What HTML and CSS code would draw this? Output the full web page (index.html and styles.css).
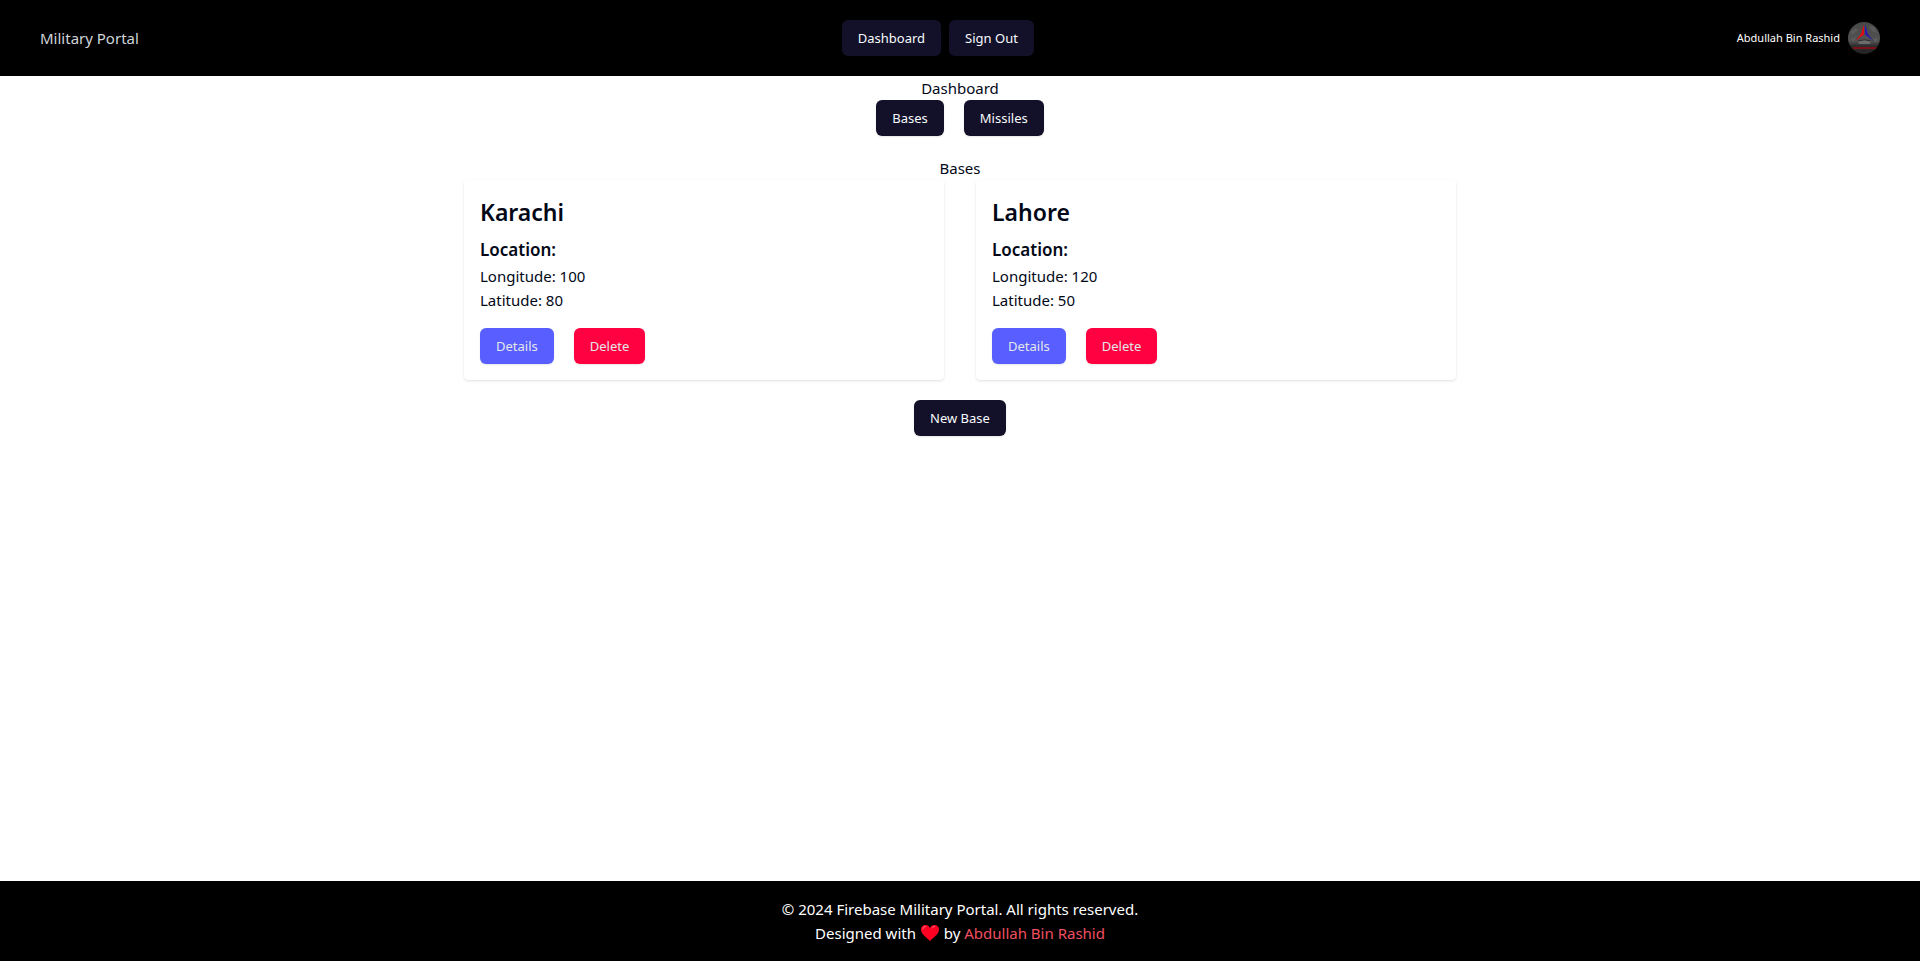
FILE: index.html
```html
<!DOCTYPE html>
<html lang="en">
<head>
<meta charset="utf-8">
<meta name="viewport" content="width=device-width, initial-scale=1">
<title>Military Portal</title>
<link rel="stylesheet" href="styles.css">
</head>
<body>
<header class="topbar">
  <a class="brand" href="#">Military Portal</a>
  <nav class="nav">
    <button class="btn" type="button">Dashboard</button>
    <button class="btn" type="button">Sign Out</button>
  </nav>
  <div class="user">
    <span class="user-name">Abdullah Bin Rashid</span>
    <svg class="avatar" viewBox="0 0 32 32" role="img" aria-label="Profile picture">
      <defs>
        <clipPath id="round"><circle cx="16" cy="16" r="16"/></clipPath>
        <linearGradient id="stone" x1="0" y1="0" x2="0" y2="1">
          <stop offset="0" stop-color="#484848"/>
          <stop offset=".6" stop-color="#525252"/>
          <stop offset=".75" stop-color="#2c2c2c"/>
          <stop offset="1" stop-color="#222"/>
        </linearGradient>
      </defs>
      <g clip-path="url(#round)">
        <rect width="32" height="32" fill="url(#stone)"/>
        <path d="M3 9l5-3 2 2-6 5zM20 4l6 1 3 6-5-2zM3 17l5-2-2 5zM25 17l5-1-2 5z" fill="#707070" opacity=".4"/>
        <path d="M10 19.500c3-2.500 10-2.500 13 0l-1 2.500H11z" fill="#6c6c6c"/>
        <path d="M10 19q6.500-2.500 13 0" fill="none" stroke="#2c2c2c"/>
        <path d="M5 26h23" stroke="#7c1018" stroke-width="2"/>
        <path d="M16 2.500V12.500L7.500 19l5.800-7.500 1.200-5z" fill="#e00b13"/>
        <path d="M17 2.500l1.500 4 1.200 5L25.500 19 17 12.500z" fill="#2b1bab"/>
      </g>
    </svg>
  </div>
</header>

<main class="main">
  <h1 class="title">Dashboard</h1>
  <div class="tabs">
    <button class="btn" type="button">Bases</button>
    <button class="btn" type="button">Missiles</button>
  </div>
  <section class="bases">
    <h2 class="title">Bases</h2>
    <div class="cards">
      <article class="card">
        <h3 class="card-name">Karachi</h3>
        <h4 class="card-label">Location:</h4>
        <p>Longitude: 100</p>
        <p>Latitude: 80</p>
        <div class="actions">
          <button class="btn btn-details" type="button">Details</button>
          <button class="btn btn-delete" type="button">Delete</button>
        </div>
      </article>
      <article class="card">
        <h3 class="card-name">Lahore</h3>
        <h4 class="card-label">Location:</h4>
        <p>Longitude: 120</p>
        <p>Latitude: 50</p>
        <div class="actions">
          <button class="btn btn-details" type="button">Details</button>
          <button class="btn btn-delete" type="button">Delete</button>
        </div>
      </article>
    </div>
    <button class="btn" type="button">New Base</button>
  </section>
</main>

<footer class="footer">
  <p>© 2024 Firebase Military Portal. All rights reserved.</p>
  <p>Designed with
    <svg class="heart" viewBox="0 0 18 18" role="img" aria-label="love">
      <path d="M9 17C6 13.500 0 10.500 0 5.500 0 2.500 2 1 4.500 1 6.500 1 8.200 2.200 9 4 9.800 2.200 11.500 1 13.500 1 16 1 18 2.500 18 5.500 18 10.500 12 13.500 9 17z" fill="#ff0022"/>
      <path d="M2 5c0-1.500 1-2.500 2.500-2.500" fill="none" stroke="#ff7a85" stroke-linecap="round"/>
      <path d="M11 4c.5-1 1.500-1.500 2.500-1.500" fill="none" stroke="#ff7a85" stroke-linecap="round"/>
    </svg>
    by <a class="author" href="#">Abdullah Bin Rashid</a></p>
</footer>
</body>
</html>
```
FILE: styles.css
```css
*, *::before, *::after { box-sizing: border-box; }

body {
  margin: 0;
  min-height: 100vh;
  display: flex;
  flex-direction: column;
  background: #fff;
  color: #020817;
  font: 400 15px/24px "Noto Sans", sans-serif;
}

h1, h2, h3, h4, p { margin: 0; }
a { color: inherit; text-decoration: none; }

.topbar {
  display: flex;
  align-items: center;
  justify-content: space-between;
  padding: 20px 40px;
  background: #000;
}
.brand { color: #d1d5db; }
.nav { display: flex; gap: 8px; }
.user { display: flex; align-items: center; gap: 8px; }
.user-name { color: #fff; font-size: 11px; line-height: 16px; }
.avatar { display: block; width: 32px; height: 32px; }

.btn {
  height: 36px;
  padding: 8px 16px;
  border: 0;
  border-radius: 6px;
  background: #121129;
  color: #f8fafc;
  font: inherit;
  font-size: 13px;
  line-height: 20px;
  box-shadow: 0 1px 2px rgba(0, 0, 0, .1);
  cursor: pointer;
}
.btn-details { background: #585eff; color: #e5e7eb; }
.btn-delete { background: #ff0040; color: #e5e7eb; }

.main {
  flex: 1;
  display: flex;
  flex-direction: column;
  align-items: center;
}
.title { font-size: 15px; font-weight: 400; }
.tabs, .actions { display: flex; gap: 20px; }

.bases {
  display: flex;
  flex-direction: column;
  align-items: center;
  width: 100%;
  max-width: 992px;
  margin-top: 20px;
}
.cards {
  display: grid;
  grid-template-columns: 1fr 1fr;
  gap: 32px;
  width: 100%;
  margin-bottom: 20px;
}
.card {
  padding: 16px;
  border-radius: 4px;
  background: #fff;
  box-shadow: 0 1px 3px rgba(0, 0, 0, .1), 0 1px 2px -1px rgba(0, 0, 0, .1);
}
.card-name { margin-bottom: 8px; font-size: 23px; line-height: 32px; font-weight: 600; }
.card-label { font-size: 17px; line-height: 28px; font-weight: 600; }
.actions { margin-top: 16px; }

.footer {
  padding: 16px;
  background: #000;
  color: #fff;
  text-align: center;
}
.heart { width: 18px; height: 18px; margin: 0 1px; vertical-align: -3px; }
.author { color: #f04f5f; }
```
